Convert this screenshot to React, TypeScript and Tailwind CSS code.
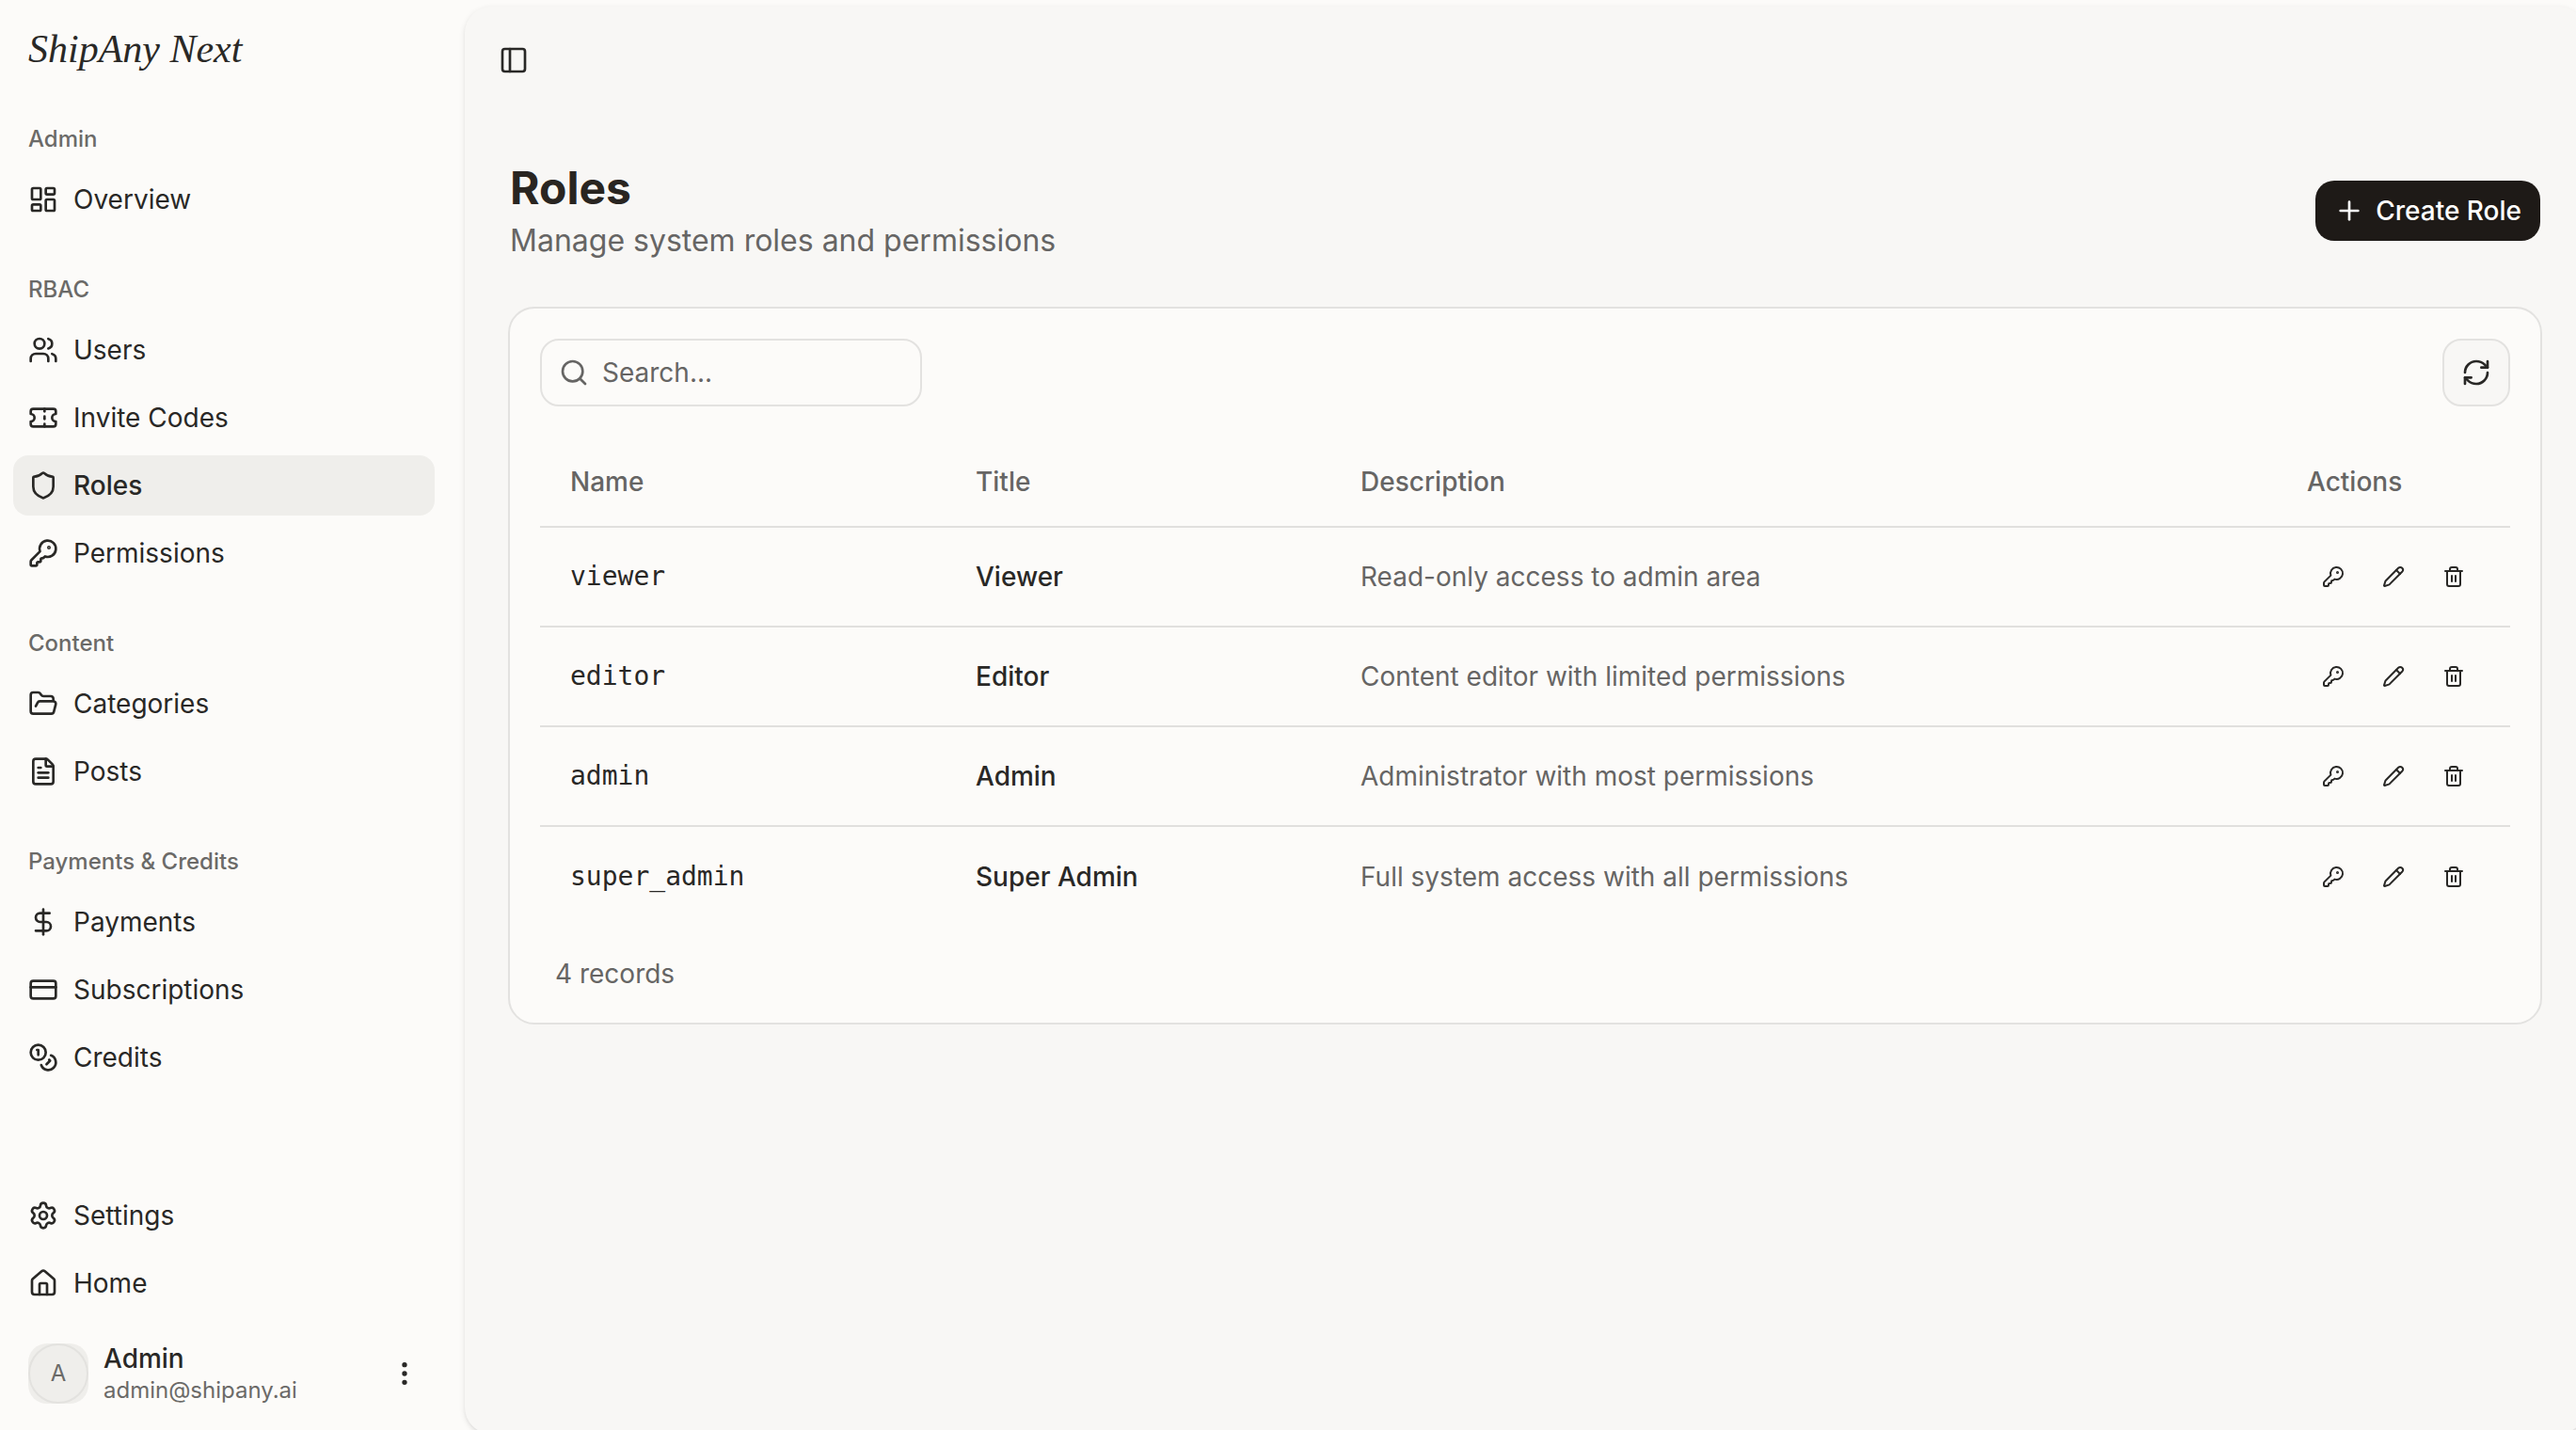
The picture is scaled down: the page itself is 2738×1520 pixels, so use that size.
import React from "react";
import {
  LayoutDashboard,
  Users,
  Ticket,
  Shield,
  KeyRound,
  FolderOpen,
  FileText,
  DollarSign,
  CreditCard,
  Coins,
  Settings,
  House,
  EllipsisVertical,
  PanelLeft,
  Plus,
  Search,
  RefreshCw,
  Pencil,
  Trash2,
  type LucideIcon,
} from "lucide-react";

type NavItem = { label: string; icon: LucideIcon; active?: boolean };
type NavGroup = { title: string; items: NavItem[] };

const groups: NavGroup[] = [
  { title: "Admin", items: [{ label: "Overview", icon: LayoutDashboard }] },
  {
    title: "RBAC",
    items: [
      { label: "Users", icon: Users },
      { label: "Invite Codes", icon: Ticket },
      { label: "Roles", icon: Shield, active: true },
      { label: "Permissions", icon: KeyRound },
    ],
  },
  {
    title: "Content",
    items: [
      { label: "Categories", icon: FolderOpen },
      { label: "Posts", icon: FileText },
    ],
  },
  {
    title: "Payments & Credits",
    items: [
      { label: "Payments", icon: DollarSign },
      { label: "Subscriptions", icon: CreditCard },
      { label: "Credits", icon: Coins },
    ],
  },
];

const footerItems: NavItem[] = [
  { label: "Settings", icon: Settings },
  { label: "Home", icon: House },
];

const roles = [
  { name: "viewer", title: "Viewer", description: "Read-only access to admin area" },
  { name: "editor", title: "Editor", description: "Content editor with limited permissions" },
  { name: "admin", title: "Admin", description: "Administrator with most permissions" },
  { name: "super_admin", title: "Super Admin", description: "Full system access with all permissions" },
];

function NavList({ items }: { items: NavItem[] }) {
  return (
    <ul className="flex flex-col gap-2">
      {items.map(({ label, icon: Icon, active }) => (
        <li key={label}>
          <a
            href="#"
            aria-current={active ? "page" : undefined}
            className={
              active
                ? "flex h-16 items-center gap-4 rounded-2xl bg-[#efeeeb] px-4 font-medium"
                : "flex h-16 items-center gap-4 rounded-2xl px-4"
            }
          >
            <Icon size={32} className="shrink-0" />
            {label}
          </a>
        </li>
      ))}
    </ul>
  );
}

function Sidebar() {
  return (
    <aside className="flex w-[478px] shrink-0 flex-col pb-3 pl-[14px] pr-4 text-[28px] leading-10">
      <div className="flex h-[100px] items-center px-4 pt-1">
        <a href="#" className="font-['Liberation_Serif',serif] text-[42px] italic leading-none">
          ShipAny Next
        </a>
      </div>
      <nav className="flex flex-col">
        {groups.map((group) => (
          <section key={group.title} className="py-4">
            <h2 className="flex h-16 items-center px-4 text-2xl font-medium text-[#6b6a68]">{group.title}</h2>
            <NavList items={group.items} />
          </section>
        ))}
      </nav>
      <div className="mt-auto">
        <NavList items={footerItems} />
        <button type="button" className="mt-4 flex h-24 w-full items-center gap-4 px-4 text-left">
          <span className="flex size-16 shrink-0 rounded-[20px] bg-[#efeeeb]">
            <span className="flex size-16 items-center justify-center rounded-full border-2 border-[#e3e2df] text-2xl text-[#6b6a68]">
              A
            </span>
          </span>
          <span className="flex flex-1 flex-col">
            <span className="font-medium leading-[35px]">Admin</span>
            <span className="text-2xl leading-8 text-[#6b6a68]">admin@shipany.ai</span>
          </span>
          <EllipsisVertical size={32} />
        </button>
      </div>
    </aside>
  );
}

function RowAction({ label, icon: Icon }: { label: string; icon: LucideIcon }) {
  return (
    <button type="button" aria-label={label} className="flex size-16 items-center justify-center">
      <Icon size={24} />
    </button>
  );
}

function RolesTable() {
  return (
    <table className="mt-8 w-full table-fixed text-left text-[28px] leading-10">
      <colgroup>
        <col className="w-[431px]" />
        <col className="w-[409px]" />
        <col />
        <col className="w-[248px]" />
      </colgroup>
      <thead>
        <tr className="h-24 border-b-2 border-[#e1e0de] text-[#666564]">
          <th className="px-8 font-medium">Name</th>
          <th className="px-8 font-medium">Title</th>
          <th className="px-8 font-medium">Description</th>
          <th className="px-8 font-medium">Actions</th>
        </tr>
      </thead>
      <tbody>
        {roles.map((role) => (
          <tr key={role.name} className="h-[106px] border-b-2 border-[#e1e0de] last:border-b-0">
            <td className="px-8 font-['DejaVu_Sans_Mono',monospace]">{role.name}</td>
            <td className="px-8 font-medium">{role.title}</td>
            <td className="px-8 text-[#666564]">{role.description}</td>
            <td className="px-7">
              <div className="flex">
                <RowAction label={`Edit permissions of ${role.title}`} icon={KeyRound} />
                <RowAction label={`Edit ${role.title}`} icon={Pencil} />
                <RowAction label={`Delete ${role.title}`} icon={Trash2} />
              </div>
            </td>
          </tr>
        ))}
      </tbody>
    </table>
  );
}

export default function App() {
  return (
    <div className="flex h-screen overflow-hidden bg-[#fcfbf9] font-['Inter',sans-serif] text-[#292826]">
      <Sidebar />
      <main className="-mb-1 -mr-[10px] ml-4 mt-[7px] min-w-0 flex-1 rounded-[28px] bg-[#f8f7f5] shadow-[0_2px_6px_rgba(0,0,0,0.1),0_2px_4px_-2px_rgba(0,0,0,0.1)]">
        <header className="flex h-[113px] items-center pl-7">
          <button type="button" aria-label="Toggle sidebar" className="flex size-12 items-center justify-center">
            <PanelLeft size={32} />
          </button>
        </header>
        <div className="flex flex-col px-[46px] pt-12">
          <div className="flex items-center justify-between px-0.5">
            <div>
              <h1 className="text-5xl font-bold leading-[64px] text-[#292521]">Roles</h1>
              <p className="text-[32px] leading-12 text-[#666564]">Manage system roles and permissions</p>
            </div>
            <button
              type="button"
              className="flex h-16 items-center gap-3 rounded-[20px] bg-[#1e1a17] px-5 text-[28px] font-medium text-white"
            >
              <Plus size={32} />
              Create Role
            </button>
          </div>
          <section className="mt-[46px] rounded-[28px] border-2 border-[#e3e2e0] bg-[#fcfbf9] p-8">
            <div className="flex items-center justify-between">
              <label className="flex h-[72px] w-[406px] items-center gap-[14px] rounded-[20px] border-2 border-[#e3e2e0] px-[18px] text-[#666564]">
                <Search size={32} className="shrink-0" />
                <input
                  type="search"
                  aria-label="Search roles"
                  placeholder="Search..."
                  className="w-full min-w-0 bg-transparent text-[28px] outline-none placeholder:text-[#666564]"
                />
              </label>
              <button
                type="button"
                aria-label="Refresh"
                className="flex size-[72px] items-center justify-center rounded-[20px] border-2 border-[#e3e2e0] bg-[#f8f7f5]"
              >
                <RefreshCw size={32} />
              </button>
            </div>
            <RolesTable />
            <p className="mt-[31px] px-4 text-[28px] leading-10 text-[#666564]">4 records</p>
          </section>
        </div>
      </main>
    </div>
  );
}
